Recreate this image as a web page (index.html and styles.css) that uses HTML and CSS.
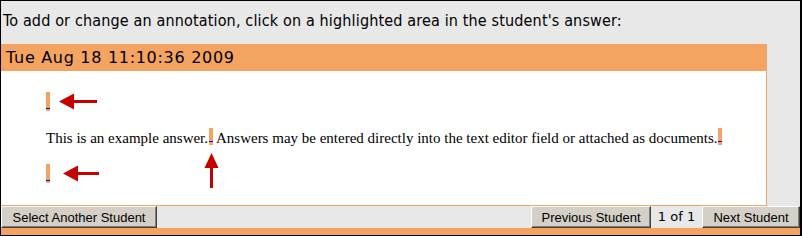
FILE: index.html
```html
<!DOCTYPE html>
<html>
<head>
<meta charset="utf-8">
<link rel="stylesheet" href="styles.css">
</head>
<body>
<div class="window">
  <div class="instructions">To add or change an annotation, click on a highlighted area in the student's answer:</div>
  <div class="panel">
    <div class="panel-header">Tue Aug 18 11:10:36 2009</div>
    <div class="panel-body">
      <div class="mark-row row-top">
        <span class="mark"></span>
        <svg class="arrow-left arrow-top" width="38" height="17" viewBox="0 0 38 17"><polygon points="0,8.5 15,0.5 15,7 38,7 38,10 15,10 15,16.5" fill="#c40000"/></svg>
      </div>
      <p class="answer">This is an example answer.<span class="mark mark-inline"><svg class="arrow-up" width="15" height="35" viewBox="0 0 15 35"><polygon points="7.5,0 14.5,15 9,15 9,35 6,35 6,15 0.5,15" fill="#c40000"/></svg></span> Answers may be entered directly into the text editor field or attached as documents.<span class="mark mark-inline"></span></p>
      <div class="mark-row row-bottom">
        <span class="mark"></span>
        <svg class="arrow-left arrow-bottom" width="36" height="17" viewBox="0 0 36 17"><polygon points="0,8.5 15,0.5 15,7 36,7 36,10 15,10 15,16.5" fill="#c40000"/></svg>
      </div>
    </div>
  </div>
  <div class="toolbar">
    <button class="btn btn-select">Select Another Student</button>
    <div class="pager">
      <button class="btn btn-prev">Previous Student</button>
      <span class="count">1 of 1</span>
      <button class="btn btn-next">Next Student</button>
    </div>
  </div>
  <div class="footer-strip"></div>
</div>
</body>
</html>
```

FILE: styles.css
```css
html, body {
  margin: 0;
  padding: 0;
  background: #ffffff;
}

.window {
  width: 802px;
  height: 236px;
  box-sizing: border-box;
  border-style: solid;
  border-color: #000000;
  border-width: 1px 2px 1px 1px;
  background: #e8e8e8;
  display: flex;
  flex-direction: column;
  font-family: "DejaVu Sans", sans-serif;
  color: #000000;
  overflow: hidden;
}

.instructions {
  height: 43px;
  box-sizing: border-box;
  padding: 10px 0 0 2px;
  font-family: "DejaVu Sans Condensed", "DejaVu Sans", sans-serif;
  font-stretch: condensed;
  font-size: 16px;
  letter-spacing: 0.15px;
  line-height: 19px;
  white-space: nowrap;
}

.panel {
  width: 766px;
}

.panel-header {
  height: 27px;
  line-height: 27px;
  background: #f4a460;
  padding-left: 5px;
  font-size: 16px;
  letter-spacing: 0.7px;
  white-space: nowrap;
}

.panel-body {
  height: 135px;
  box-sizing: border-box;
  background: #ffffff;
  border-right: 1px solid #f4a460;
  border-bottom: 1px solid #f4a460;
  padding-left: 45px;
  display: flex;
  flex-direction: column;
  align-items: flex-start;
}

.mark-row {
  height: 19px;
  display: flex;
  align-items: center;
}

.row-top {
  margin-top: 21px;
}

.row-bottom {
  margin-top: 16px;
}

.mark {
  display: block;
  width: 4px;
  height: 19px;
  background: linear-gradient(to bottom, #f4a460 0, #f4a460 16px, #0000ff 16px, #0000ff 17px, #f4a460 17px);
}

.arrow-left {
  display: block;
}

.arrow-top {
  margin-left: 9px;
}

.arrow-bottom {
  margin-left: 13px;
}

.answer {
  margin: 17px 0 0;
  font-family: "Liberation Serif", "Times New Roman", serif;
  font-size: 15px;
  line-height: 20px;
  white-space: nowrap;
}

.mark-inline {
  display: inline-block;
  position: relative;
  height: 17px;
  vertical-align: -2px;
  margin-left: 1px;
  background: linear-gradient(to bottom, #f4a460 0, #f4a460 13px, #0000ff 13px, #0000ff 14px, #f4a460 14px);
}

.arrow-up {
  position: absolute;
  left: -5px;
  top: 25px;
}

.toolbar {
  height: 22px;
  display: flex;
  justify-content: space-between;
}

.pager {
  display: flex;
}

.btn {
  height: 22px;
  box-sizing: border-box;
  margin: 0;
  padding: 0;
  background: #d4d0c8;
  border: 1px solid;
  border-color: #ffffff #404040 #404040 #ffffff;
  box-shadow: inset -1px -1px 0 #808080;
  font-family: "Liberation Sans", Arial, sans-serif;
  font-size: 13px;
  color: #000000;
  text-align: center;
}

.btn-select {
  width: 156px;
}

.btn-prev {
  width: 120px;
}

.btn-next {
  width: 98px;
}

.count {
  width: 51px;
  text-align: center;
  font-family: "DejaVu Sans", sans-serif;
  font-size: 13px;
  line-height: 22px;
}

.footer-strip {
  height: 7px;
  background: #f4a460;
}
```
